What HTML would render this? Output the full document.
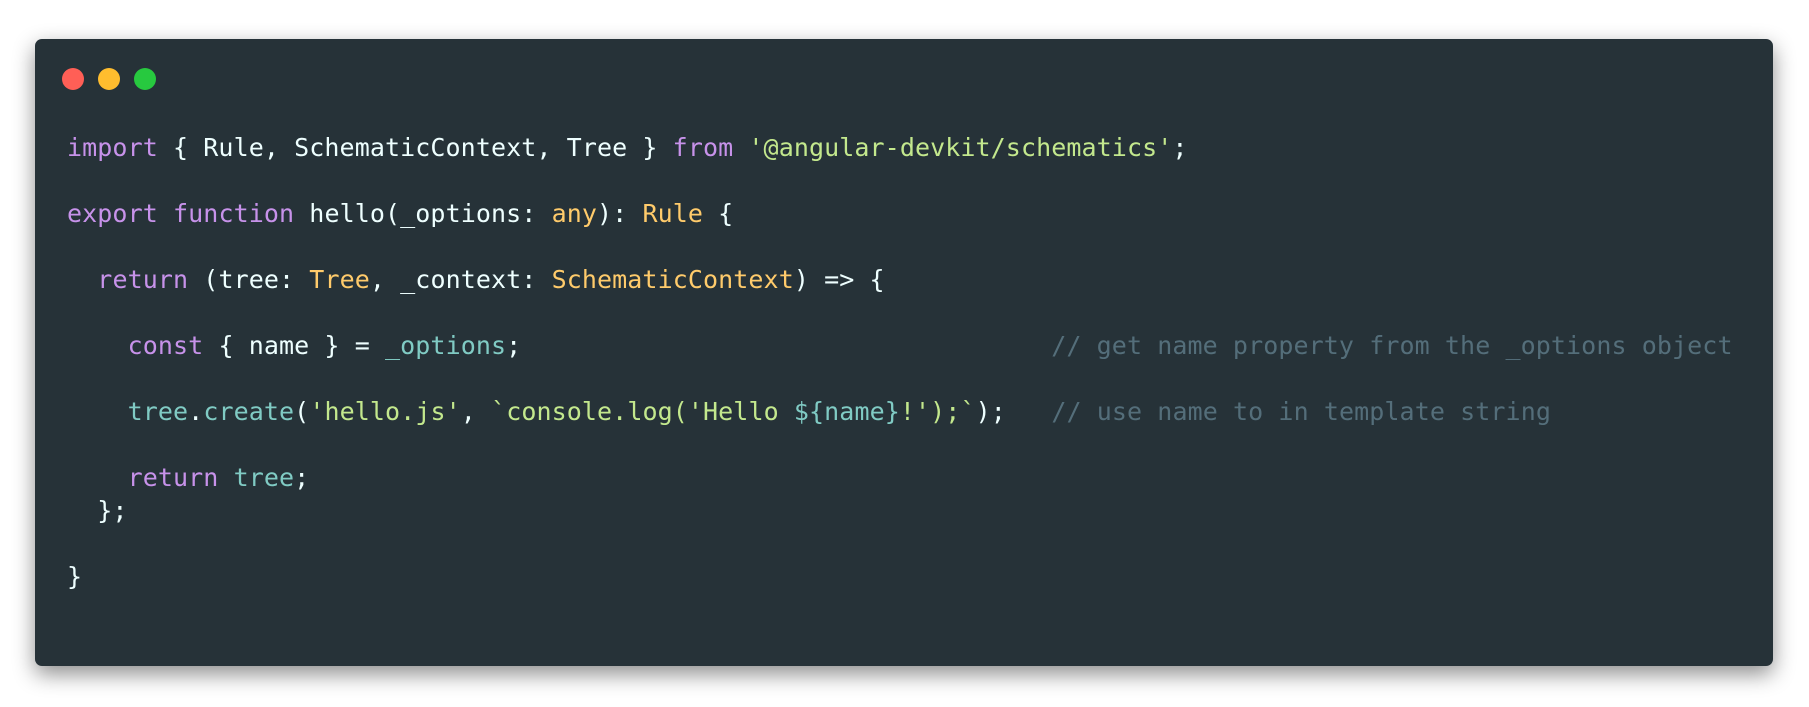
<!DOCTYPE html>
<html><head><style>
html,body{margin:0;padding:0;background:#fff;width:1809px;height:707px;overflow:hidden}
.card{position:absolute;left:35px;top:39px;width:1738px;height:627px;background:#263238;border-radius:7px;box-shadow:0 8px 22px rgba(0,0,0,0.45)}
.dot{position:absolute;top:29px;width:22px;height:22px;border-radius:50%}
pre{position:absolute;left:32px;top:92px;margin:0;font-family:"DejaVu Sans Mono","Liberation Mono",monospace;font-size:25px;letter-spacing:0.09px;line-height:33px;color:#eeffff}
.k{color:#c792ea}.y{color:#ffcb6b}.s{color:#c3e88d}.c{color:#80cbc4}.m{color:#546e7a}
</style></head><body>
<div class="card">
<div class="dot" style="left:27px;background:#ff5f56"></div>
<div class="dot" style="left:63px;background:#ffbd2e"></div>
<div class="dot" style="left:99px;background:#27c93f"></div>
<pre><span class="k">import</span> { Rule, SchematicContext, Tree } <span class="k">from</span> <span class="s">'@angular-devkit/schematics'</span>;

<span class="k">export</span> <span class="k">function</span> hello(_options: <span class="y">any</span>): <span class="y">Rule</span> {

  <span class="k">return</span> (tree: <span class="y">Tree</span>, _context: <span class="y">SchematicContext</span>) =&gt; {

    <span class="k">const</span> { name } = <span class="c">_options</span>;                                   <span class="m">// get name property from the _options object</span>

    <span class="c">tree</span>.<span class="c">create</span>(<span class="s">'hello.js'</span>, <span class="s">`console.log('Hello </span><span class="c">${name}</span><span class="s">!');`</span>);   <span class="m">// use name to in template string</span>

    <span class="k">return</span> <span class="c">tree</span>;
  };

}</pre>
</div>
</body></html>
